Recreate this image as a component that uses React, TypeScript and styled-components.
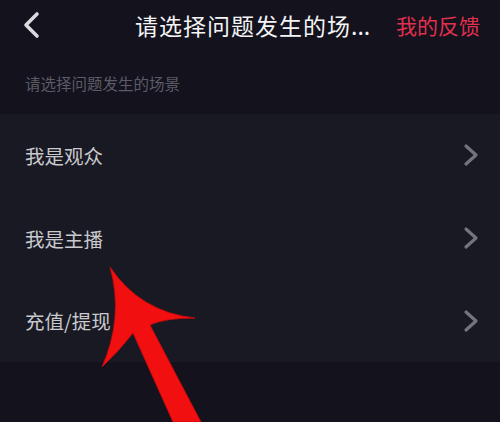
import styled, { createGlobalStyle } from "styled-components";

const GlobalStyle = createGlobalStyle`
  html, body {
    margin: 0;
    padding: 0;
    background: #13121d;
  }
  body {
    font-family: "Noto Sans CJK SC", "Noto Sans", sans-serif;
  }
`;

const Page = styled.div`
  position: relative;
  width: 500px;
  height: 422px;
  overflow: hidden;
  background: #13121d;
  display: flex;
  flex-direction: column;
`;

const Header = styled.div`
  height: 50px;
  display: flex;
  align-items: center;
  padding: 0 20px 0 22px;
`;

const BackButton = styled.div`
  width: 20px;
  height: 28px;
  display: flex;
  align-items: center;
  flex-shrink: 0;
`;

const Title = styled.div`
  margin-left: 93px;
  color: #f4f4f6;
  font-size: 23px;
  letter-spacing: 1px;
  white-space: nowrap;
  flex-shrink: 0;
`;

const Dots = styled.span`
  letter-spacing: 0;
`;

const Feedback = styled.div`
  margin-left: auto;
  color: #e0304e;
  font-size: 21px;
  white-space: nowrap;
  flex-shrink: 0;
`;

const SectionHint = styled.div`
  height: 64px;
  display: flex;
  align-items: center;
  padding-left: 25px;
  color: #5c5b66;
  font-size: 15.5px;
  padding-top: 1px;
  box-sizing: border-box;
`;

const Panel = styled.div`
  background: #191923;
  display: flex;
  flex-direction: column;
`;

const Row = styled.div`
  height: 82.7px;
  display: flex;
  align-items: center;
  justify-content: space-between;
  padding: 0 21px 0 25px;
  color: #c9c9ce;
  font-size: 19.5px;
`;

const Arrow = styled.svg`
  position: absolute;
  left: 0;
  top: 0;
  pointer-events: none;
`;

const Chevron = ({ left = false, color }: { left?: boolean; color: string }) => (
  <svg width={left ? 18 : 16} height={left ? 28 : 24} viewBox={left ? "0 0 18 28" : "0 0 16 24"}>
    <path
      d={left ? "M15 3 L4 14 L15 25" : "M3 3 L13 12 L3 21"}
      fill="none"
      stroke={color}
      strokeWidth={left ? 3.6 : 3.2}
      strokeLinecap="round"
      strokeLinejoin="round"
    />
  </svg>
);

const scenes = ["我是观众", "我是主播", "充值/提现"];

export default function App() {
  return (
    <>
      <GlobalStyle />
      <Page>
        <Header>
          <BackButton>
            <Chevron left color="#d9d9de" />
          </BackButton>
          <Title>
            请选择问题发生的场<Dots>...</Dots>
          </Title>
          <Feedback>我的反馈</Feedback>
        </Header>
        <SectionHint>请选择问题发生的场景</SectionHint>
        <Panel>
          {scenes.map((s) => (
            <Row key={s}>
              <span>{s}</span>
              <Chevron color="#74737e" />
            </Row>
          ))}
        </Panel>
        <Arrow width="500" height="422" viewBox="0 0 500 422">
          <path
            d="M110 267 Q140 312 195 318 Q165 318 150 325 L201 422 L173 422 L133 333 Q120 350 102 367 Q124 317 110 267 Z"
            fill="#f10f0f"
            stroke="#c80a0a"
            strokeWidth="0.8"
            strokeLinejoin="round"
          />
        </Arrow>
      </Page>
    </>
  );
}
